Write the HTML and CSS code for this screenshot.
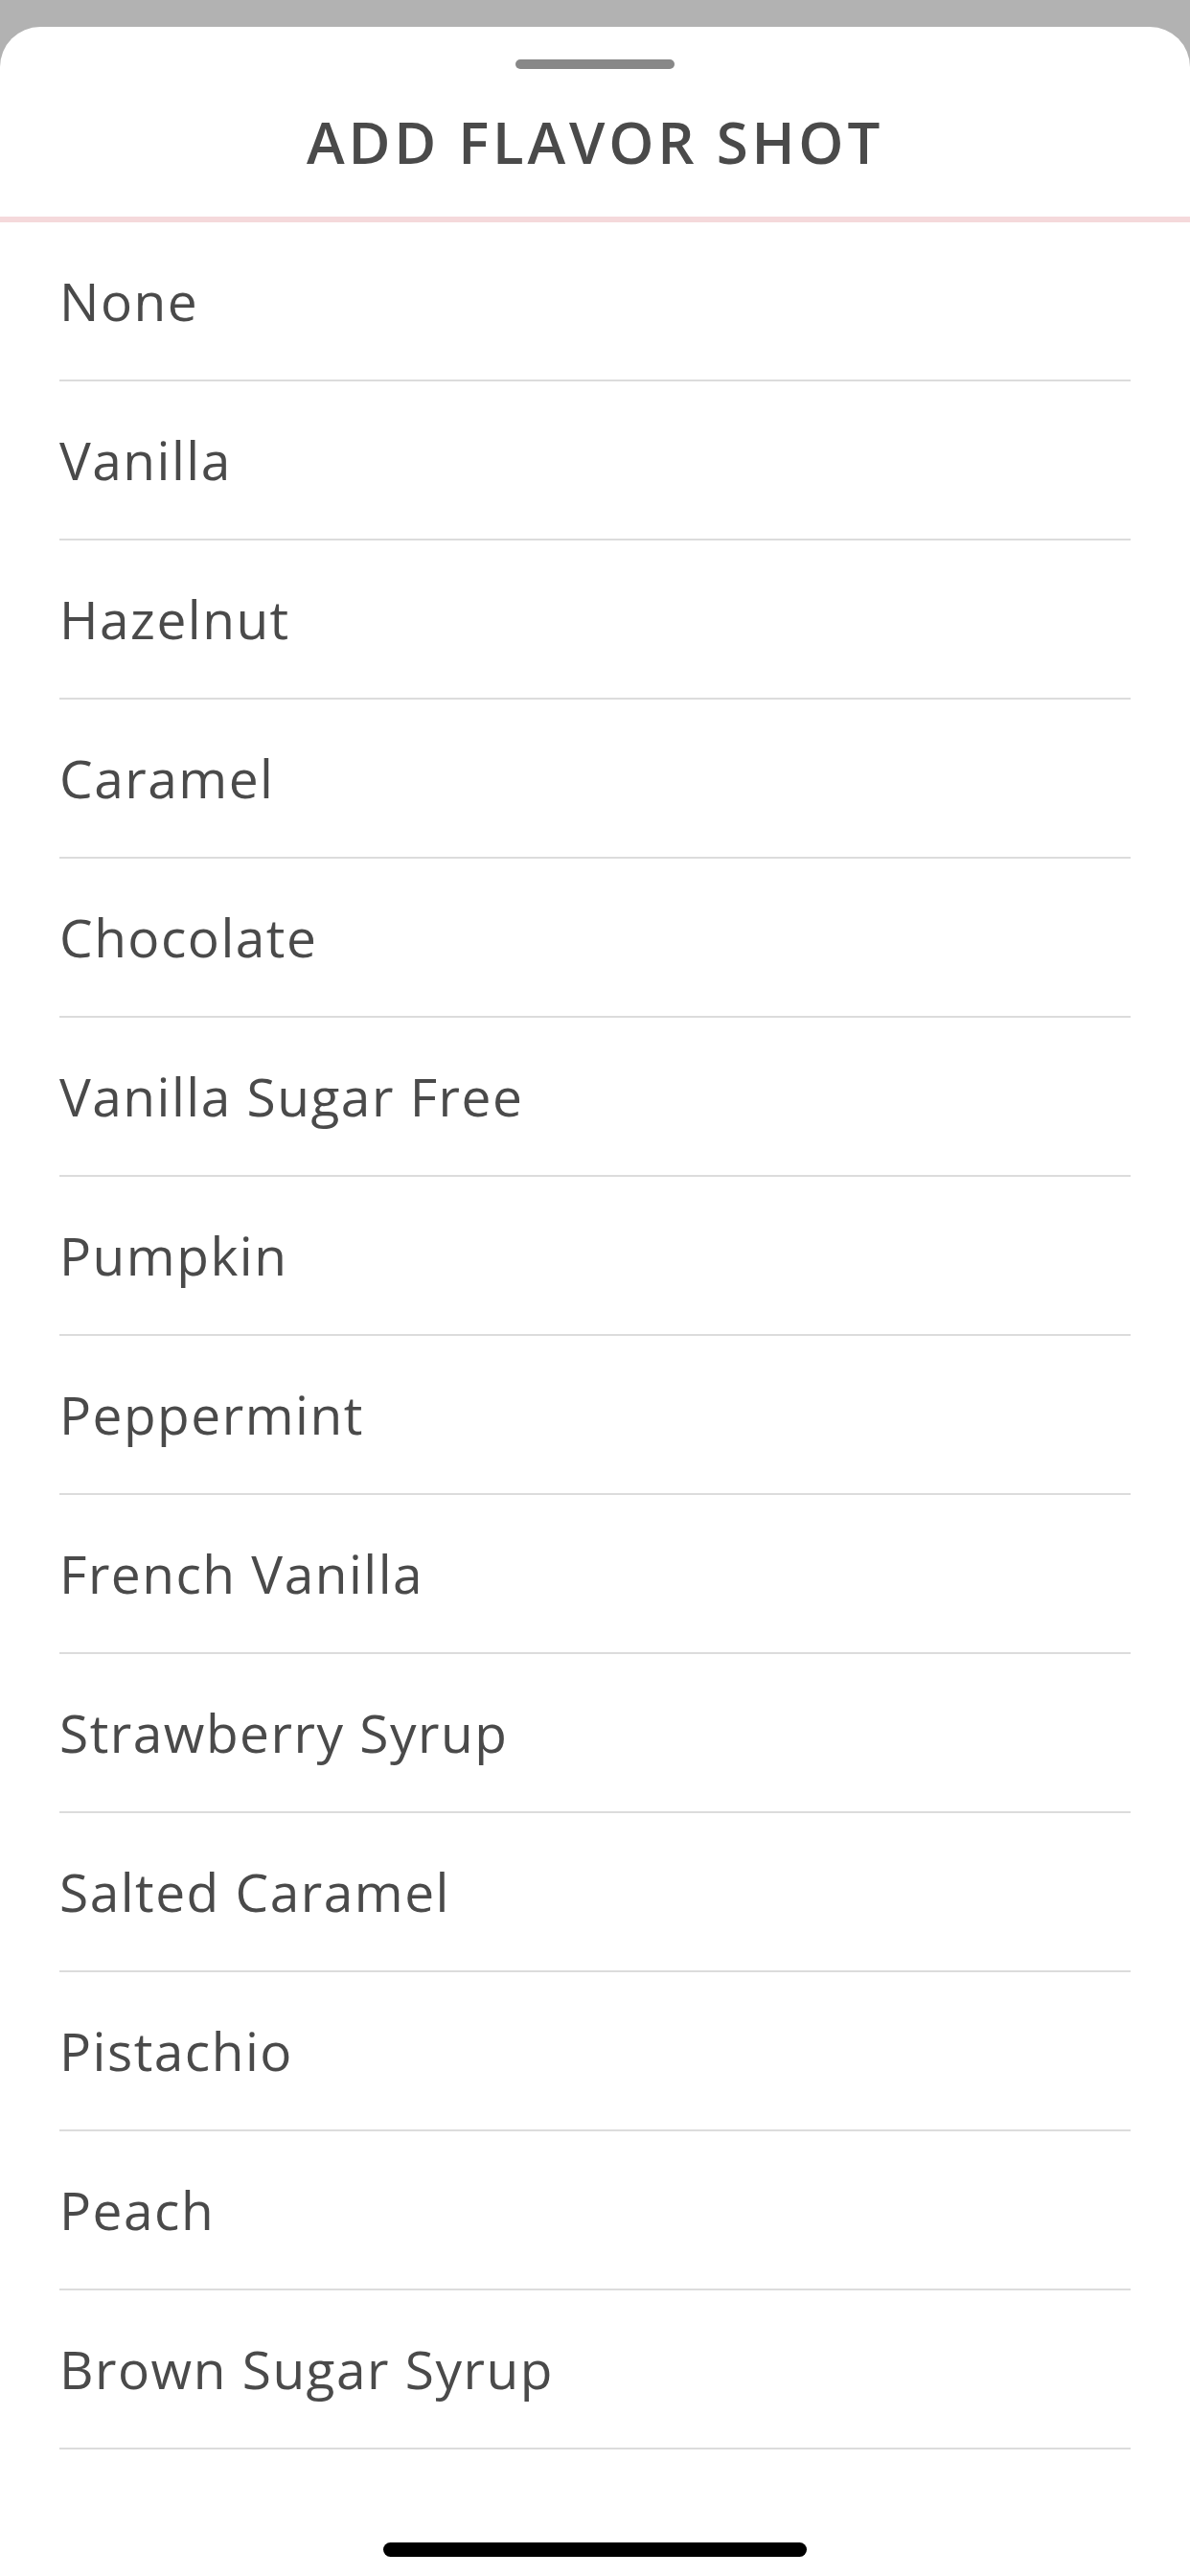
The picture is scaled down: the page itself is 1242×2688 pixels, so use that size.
FILE: index.html
```html
<!DOCTYPE html>
<html lang="en">
<head>
<meta charset="utf-8">
<title>Add Flavor Shot</title>
<link rel="stylesheet" href="styles.css">
</head>
<body>
<div class="sheet">
  <header class="sheet-header">
    <div class="grabber"></div>
    <h1 class="title">ADD FLAVOR SHOT</h1>
  </header>
  <ul class="options">
    <li class="option">None</li>
    <li class="option">Vanilla</li>
    <li class="option">Hazelnut</li>
    <li class="option">Caramel</li>
    <li class="option">Chocolate</li>
    <li class="option">Vanilla Sugar Free</li>
    <li class="option">Pumpkin</li>
    <li class="option">Peppermint</li>
    <li class="option">French Vanilla</li>
    <li class="option">Strawberry Syrup</li>
    <li class="option">Salted Caramel</li>
    <li class="option">Pistachio</li>
    <li class="option">Peach</li>
    <li class="option">Brown Sugar Syrup</li>
  </ul>
  <div class="home-indicator"></div>
</div>
</body>
</html>
```

FILE: styles.css
```css
html, body {
  margin: 0;
  padding: 0;
}
body {
  background: #b2b2b2;
  width: 1242px;
  height: 2688px;
  overflow: hidden;
  font-family: "Open Sans", "Noto Sans", sans-serif;
  color: #4a4a4a;
}
.sheet {
  margin-top: 28px;
  height: 2660px;
  background: #ffffff;
  border-radius: 42px 42px 0 0;
  display: flex;
  flex-direction: column;
}
.sheet-header {
  display: flex;
  flex-direction: column;
  align-items: center;
  padding-top: 34px;
  padding-bottom: 48px;
  border-bottom: 6px solid #f5d9db;
}
.grabber {
  width: 166px;
  height: 10px;
  border-radius: 5px;
  background: #888888;
}
.title {
  margin: 46px 0 0;
  font-size: 60px;
  line-height: 60px;
  font-weight: 600;
  letter-spacing: 3.8px;
  color: #4a4a4a;
}
.options {
  list-style: none;
  margin: 0 62px;
  padding: 0;
}
.option {
  height: 164px;
  display: flex;
  align-items: center;
  border-bottom: 2px solid #dcdcdc;
  font-size: 55px;
  line-height: 60px;
  letter-spacing: 1.5px;
}
.home-indicator {
  margin: auto auto 20px;
  width: 442px;
  height: 15px;
  border-radius: 8px;
  background: #000000;
}
```
